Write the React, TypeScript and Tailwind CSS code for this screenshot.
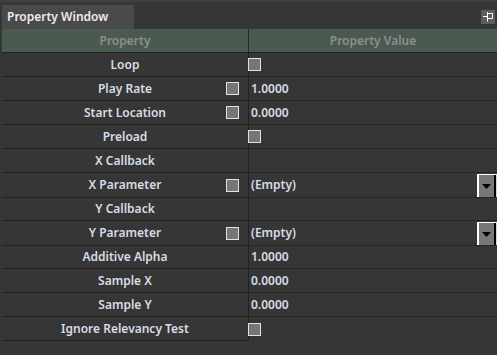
import React from "react";

type Row = {
  label: string;
  check?: boolean;
  value?: string;
  valueCheck?: boolean;
  dropdown?: boolean;
};

const rows: Row[] = [
  { label: "Loop", valueCheck: true },
  { label: "Play Rate", check: true, value: "1.0000" },
  { label: "Start Location", check: true, value: "0.0000" },
  { label: "Preload", valueCheck: true },
  { label: "X Callback" },
  { label: "X Parameter", check: true, value: "(Empty)", dropdown: true },
  { label: "Y Callback" },
  { label: "Y Parameter", check: true, value: "(Empty)", dropdown: true },
  { label: "Additive Alpha", value: "1.0000" },
  { label: "Sample X", value: "0.0000" },
  { label: "Sample Y", value: "0.0000" },
  { label: "Ignore Relevancy Test", valueCheck: true },
];

const Box = ({ className = "" }: { className?: string }) => (
  <span className={`block w-[13px] h-[13px] border border-[#e2e2e2] bg-[#767676] ${className}`} />
);

const PinIcon = () => (
  <svg width="14" height="14" viewBox="0 0 14 14" className="block">
    <rect width="14" height="14" fill="#5c5c5c" />
    <path d="M2 6.5H6.5M6.5 2V11.5M6.5 3.5H11.5V8.5H6.5" stroke="#fff" strokeWidth="1" fill="none" />
  </svg>
);

const Dropdown = () => (
  <div className="ml-auto flex h-[23px] w-[20px] mt-px border-l-2 border-t border-white bg-[#777]">
    <div className="flex flex-1 items-center justify-center">
      <svg width="9" height="5" viewBox="0 0 9 5" className="block">
        <path d="M0 0H9L4.5 5Z" fill="#000" />
      </svg>
    </div>
    <div className="w-[2px] bg-black" />
    <div className="w-px bg-[#d8d8d8]" />
  </div>
);

export default function App() {
  return (
    <div
      className="w-[497px] h-[355px] overflow-hidden bg-[#363636] flex flex-col"
      style={{ fontFamily: '"Noto Sans", "Open Sans", sans-serif' }}
    >
      <div className="h-[29px] shrink-0 flex flex-col border-t-2 border-[#414141]">
        <div className="flex flex-1 items-end pl-[2px] pr-[2px]">
          <div className="h-[24px] w-[132px] bg-[#4a4a4a] pl-[5px] flex items-center text-[12px] font-semibold text-[#ececec]">
            Property Window
          </div>
          <div className="ml-auto mb-[5px]">
            <PinIcon />
          </div>
        </div>
      </div>

      <div className="ml-[2px] flex flex-col">
        <div className="grid grid-cols-[247px_1fr] h-[24px] bg-[#4b5a51] border-b border-[#202020] text-[12px] font-semibold text-[#8e8e8e]">
          <div className="flex items-center justify-center border-r border-[#2a2a2a]">Property</div>
          <div className="flex items-center justify-center">Property Value</div>
        </div>

        {rows.map((r, i) => {
          const last = i === rows.length - 1;
          return (
            <div key={r.label} className="grid grid-cols-[247px_1fr] h-[24px] text-[12px] font-semibold text-[#d6dde6]">
              <div className="grid grid-cols-[36px_1fr_36px] items-center border-r border-b border-[#222]">
                <span />
                <span className="text-center whitespace-nowrap">{r.label}</span>
                <span className="flex justify-end pr-[9px]">{r.check && <Box />}</span>
              </div>
              <div className={`flex items-center ${last ? "" : "border-b border-[#262626]"}`}>
                {r.valueCheck && <Box className="-ml-px" />}
                {r.value && <span className="pl-[2px] whitespace-nowrap">{r.value}</span>}
                {r.dropdown && <Dropdown />}
              </div>
            </div>
          );
        })}
      </div>
    </div>
  );
}
